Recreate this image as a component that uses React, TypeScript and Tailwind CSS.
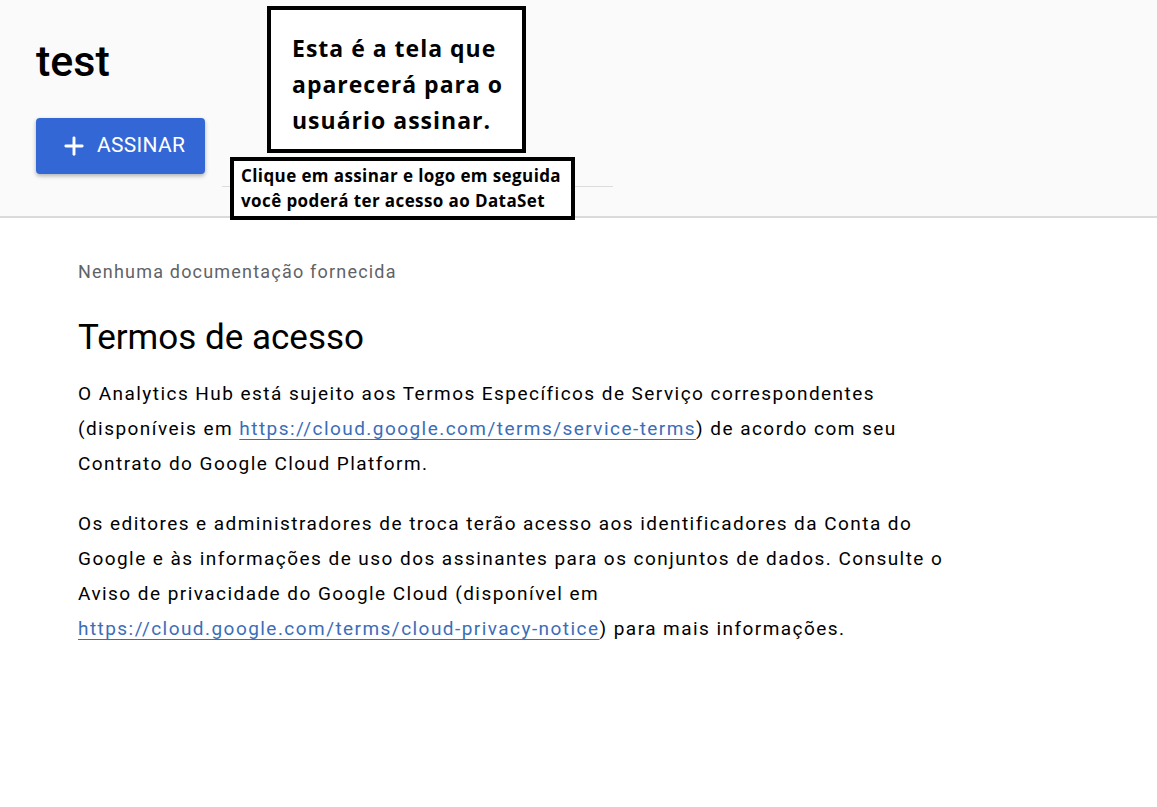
import { Plus } from 'lucide-react'

export default function App() {
  return (
    <div className="relative min-h-[807px] bg-white font-['Roboto',sans-serif] text-[#202124]">
      <header className="h-[218px] border-b-2 border-[#dadada] bg-[#fafafa] pl-9 pt-[37px]">
        <h1 className="text-[43px] leading-[48px] font-medium text-black">test</h1>
        <button className="mt-[33px] flex h-14 w-[169px] items-center gap-[9px] rounded bg-[#3367d6] pl-[24px] text-[21px] tracking-[0.3px] text-white shadow-[0_2px_4px_rgba(0,0,0,0.3)]">
          <Plus className="h-7 w-7" strokeWidth={2.5} />
          ASSINAR
        </button>
      </header>

      {/* annotation overlays */}
      <div className="absolute left-[222px] top-[186px] h-px w-[391px] bg-[#dcdcdc]" />
      <div className="absolute left-[267px] top-[6px] w-[259px] h-[147px] border-4 border-black bg-white pl-[21px] pt-[20px] font-['Open_Sans',sans-serif] text-[23px] leading-[36px] tracking-[1px] font-bold text-black">
        <p>Esta é a tela que</p>
        <p>aparecerá para o</p>
        <p>usuário assinar.</p>
      </div>
      <div className="absolute left-[230px] top-[157px] w-[345px] h-[63px] border-4 border-black bg-white pl-[7px] pt-[2px] font-['Open_Sans',sans-serif] text-[17px] leading-[25px] tracking-[0.4px] font-bold text-black">
        <p>Clique em assinar e logo em seguida</p>
        <p>você poderá ter acesso ao DataSet</p>
      </div>

      <main className="w-[968px] pl-[78px] pt-[42px]">
        <p className="text-[18px] leading-6 tracking-[1.2px] text-[#5f6368]">Nenhuma documentação fornecida</p>
        <h2 className="mt-[34px] text-[35px] leading-[40px] text-black">Termos de acesso</h2>
        <div className="mt-[18px] space-y-[25px] text-[19px] leading-[35px] tracking-[1.45px] text-black">
          <p>
            O Analytics Hub está sujeito aos Termos Específicos de Serviço correspondentes (disponíveis em{' '}
            <a href="#" className="text-[#3b6db8] underline underline-offset-4 decoration-1">https://cloud.google.com/terms/service-terms</a>
            ) de acordo com seu Contrato do Google Cloud Platform.
          </p>
          <p>
            Os editores e administradores de troca terão acesso aos identificadores da Conta do Google e às informações de uso dos assinantes para os conjuntos de dados. Consulte o Aviso de privacidade do Google Cloud (disponível em{' '}
            <a href="#" className="text-[#3b6db8] underline underline-offset-4 decoration-1">https://cloud.google.com/terms/cloud-privacy-notice</a>
            ) para mais informações.
          </p>
        </div>
      </main>
    </div>
  )
}
